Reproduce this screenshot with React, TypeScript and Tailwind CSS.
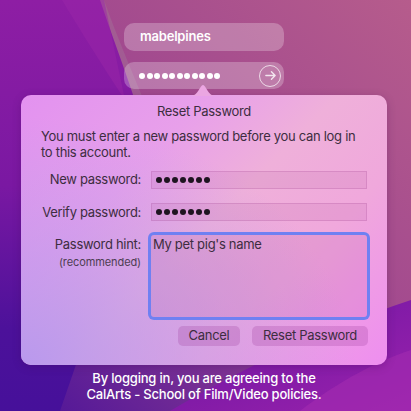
import React from "react";

const font = { fontFamily: "Inter, 'Noto Sans', sans-serif" };

const Wallpaper = () => (
  <svg className="absolute inset-0 h-full w-full" viewBox="0 0 411 411" preserveAspectRatio="none">
    <defs>
      <linearGradient id="bg" x1="1" y1="0" x2="0" y2="1">
        <stop offset="0%" stopColor="#b65c8c" />
        <stop offset="45%" stopColor="#a0488f" />
        <stop offset="100%" stopColor="#4a1299" />
      </linearGradient>
      <linearGradient id="left" x1="0" y1="0" x2="0" y2="1">
        <stop offset="0%" stopColor="#8e1ea4" />
        <stop offset="45%" stopColor="#7a18a2" />
        <stop offset="80%" stopColor="#4c119a" />
        <stop offset="100%" stopColor="#46109a" />
      </linearGradient>
      <linearGradient id="br" x1="0" y1="0" x2="1" y2="1">
        <stop offset="0%" stopColor="#6a14a2" />
        <stop offset="100%" stopColor="#9a22ac" />
      </linearGradient>
    </defs>
    <rect width="411" height="411" fill="url(#bg)" />
    <path d="M104 0 C118 40 140 90 160 140 L0 260 L0 0 Z" fill="#a27d9a" opacity="0.35" />
    <path d="M100 0 C115 45 135 95 150 150 L60 411 L0 411 L0 0 Z" fill="url(#left)" />
    <path d="M62 0 C80 30 105 70 125 100 L104 0 Z" fill="#9a26a8" opacity="0.5" />
    <path d="M170 411 C240 370 320 330 411 300 L411 411 Z" fill="url(#br)" />
    <path d="M300 411 C340 380 380 360 411 350 L411 411 Z" fill="#a42cb0" opacity="0.6" />
  </svg>
);

const Dots = ({ n }: { n: number }) => (
  <div className="flex gap-[2px]">
    {Array.from({ length: n }).map((_, i) => (
      <span key={i} className="block h-[6px] w-[6px] rounded-full bg-[#1e1420]" />
    ))}
  </div>
);

export default function App() {
  return (
    <div className="relative h-[411px] w-[411px] overflow-hidden" style={font}>
      <Wallpaper />
      <div className="relative flex flex-col items-center pr-[3px] pt-[23px]">
        <div className="flex h-[28px] w-[160px] items-center rounded-[10px] bg-white/25 pl-[16px] text-[13px] font-semibold tracking-[-0.2px] text-white">
          mabelpines
        </div>
        <div className="mt-[11px] flex h-[27px] w-[160px] items-center justify-between rounded-[10px] bg-white/25 pl-[15px] pr-[3px]">
          <div className="flex gap-[1.5px]">
            {Array.from({ length: 11 }).map((_, i) => (
              <span key={i} className="block h-[6px] w-[6px] rounded-full bg-white" />
            ))}
          </div>
          <div className="flex h-[22px] w-[22px] items-center justify-center rounded-full border-[1.5px] border-white/70">
            <svg width="13" height="13" viewBox="0 0 14 14" fill="none" stroke="rgba(255,255,255,0.8)" strokeWidth="1.5" strokeLinecap="round" strokeLinejoin="round">
              <path d="M2 7h10M8 3l4 4-4 4" />
            </svg>
          </div>
        </div>

        <div className="relative mt-[6px] h-[270px] w-[366px] rounded-[10px] bg-[linear-gradient(135deg,#e392f0_0%,#e8a0ea_30%,#efb0da_50%,#f0a8dc_70%,#ee8ef0_100%)] shadow-[0_2px_8px_rgba(60,0,80,0.25)]">
          <div className="absolute inset-0 rounded-[10px] bg-[radial-gradient(ellipse_at_0%_100%,rgba(182,152,238,0.95),rgba(182,152,238,0)_65%)]" />
          <svg className="absolute left-[170px] top-[-10px]" width="24" height="11" viewBox="0 0 24 11">
            <path d="M0 11 C7 11 9 0 12 0 C15 0 17 11 24 11 Z" fill="#eba6e2" />
          </svg>
          <div className="relative flex flex-col px-[20px] text-[13px] tracking-[-0.3px] text-[#3d2d40]">
            <div className="pt-[8px] text-center leading-[16px]">Reset Password</div>
            <p className="mt-[9px] leading-[16px]">
              You must enter a new password before you can log in to this account.
            </p>
            <div className="mt-[10px] grid grid-cols-[100px_1fr] items-center gap-x-[10px] gap-y-[13px]">
              <div className="whitespace-nowrap text-right">New password:</div>
              <div className="flex h-[18px] items-center border border-[#9a3c8c]/20 bg-[#9a3c8c]/10 pl-[4px]">
                <Dots n={7} />
              </div>
              <div className="whitespace-nowrap text-right">Verify password:</div>
              <div className="flex h-[18px] items-center border border-[#9a3c8c]/20 bg-[#9a3c8c]/10 pl-[4px]">
                <Dots n={7} />
              </div>
              <div className="self-start pt-[1px] text-right leading-[16px]">
                <div className="whitespace-nowrap">Password hint:</div>
                <div className="mt-[2px] whitespace-nowrap text-[11px] tracking-[-0.1px] text-[#4d3d52]">(recommended)</div>
              </div>
              <div className="h-[82px] rounded-[3px] bg-[#9a3c8c]/12 pl-[2px] pt-[1px] leading-[16px] ring-[3px] ring-[#6f80f2]">
                My pet pig's name
              </div>
            </div>
            <div className="mt-[9px] flex justify-end gap-[12px]">
              <button className="h-[20px] w-[62px] rounded-[5px] bg-[#9a3c9c]/25 tracking-[-0.3px] text-[#3d2d40]">Cancel</button>
              <button className="mr-[-1px] h-[20px] w-[116px] rounded-[5px] bg-[#9a3c9c]/25 tracking-[-0.3px] text-[#3d2d40]">Reset Password</button>
            </div>
          </div>
        </div>

        <div className="mt-[5px] text-center text-[13px] font-medium leading-[16px] tracking-[-0.2px] text-white">
          By logging in, you are agreeing to the
          <br />
          CalArts - School of Film/Video policies.
        </div>
      </div>
    </div>
  );
}
